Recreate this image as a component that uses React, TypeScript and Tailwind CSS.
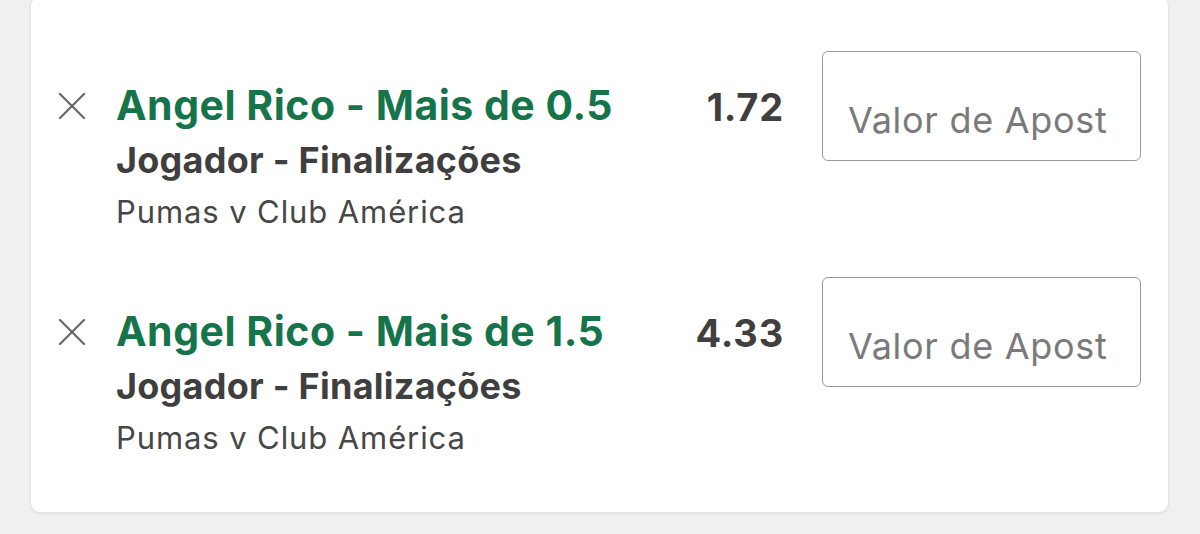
import React from "react";

const font = { fontFamily: "Inter, 'Noto Sans', sans-serif" };

function XIcon() {
  return (
    <svg width="28" height="26" viewBox="0 0 28 26" className="block">
      <line x1="2" y1="1" x2="26" y2="25" stroke="#666666" strokeWidth="2.2" strokeLinecap="round" />
      <line x1="26" y1="1" x2="2" y2="25" stroke="#666666" strokeWidth="2.2" strokeLinecap="round" />
    </svg>
  );
}

function Row({ title, odds }: { title: string; odds: string }) {
  return (
    <div className="flex items-start">
      <div className="flex items-start mt-[26px] w-[660px] shrink-0">
        <div className="w-[57px] shrink-0 pl-[27px] pt-[16px]">
          <XIcon />
        </div>
        <div className="pl-[28px]">
          <div className="text-[41px] leading-[56px] font-bold text-[#15744a] whitespace-nowrap tracking-[0.5px]">
            {title}
          </div>
          <div className="text-[36px] leading-[54px] font-bold text-[#3f3f3f] whitespace-nowrap tracking-[0.25px]">
            Jogador - Finalizações
          </div>
          <div className="text-[31px] leading-[50px] text-[#474747] whitespace-nowrap tracking-[0.9px]">
            Pumas v Club América
          </div>
        </div>
      </div>
      <div className="mt-[26px] pt-[2px] w-[93px] text-right text-[38px] leading-[56px] font-bold text-[#3f3f3f] shrink-0 tracking-[0.8px]">
        {odds}
      </div>
      <div className="ml-[38px] w-[319px] h-[110px] shrink-0 border-[1.5px] border-[#9b9b9b] rounded-[6px] overflow-hidden pt-[46px] pl-[25px]">
        <div className="text-[36px] leading-[44px] text-[#7a7a7a] whitespace-nowrap tracking-[0.7px]">Valor de Apost</div>
      </div>
    </div>
  );
}

export default function App() {
  return (
    <div className="w-[1200px] h-[534px] bg-[#f0f0f0] overflow-hidden" style={font}>
      <div className="ml-[30px] mt-[-4px] w-[1139px] h-[517px] bg-white rounded-[10px] border border-[#e6e6e6] shadow-[0_1px_2px_rgba(0,0,0,0.08)] pt-[54px] flex flex-col gap-[40px]">
        <Row title="Angel Rico - Mais de 0.5" odds="1.72" />
        <Row title="Angel Rico - Mais de 1.5" odds="4.33" />
      </div>
    </div>
  );
}
